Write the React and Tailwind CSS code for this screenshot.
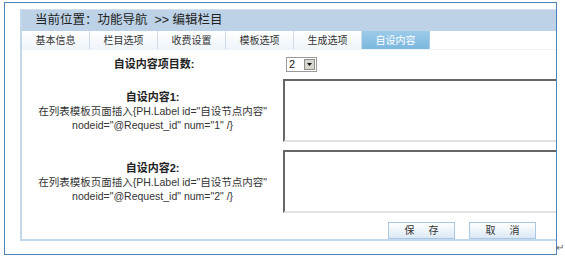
const tabs = ['基本信息', '栏目选项', '收费设置', '模板选项', '生成选项', '自设内容'];

function Tab({ label, active }) {
  return (
    <div
      className={`w-[68px] h-full flex items-center justify-center border-r text-[10px] ${
        active
          ? 'bg-gradient-to-b from-[#9ccbe8] to-[#7bb7df] text-white border-[#a9cde6]'
          : 'bg-gradient-to-b from-white to-[#eef4fa] text-[#333] border-[#cddbe9]'
      }`}
    >
      {label}
    </div>
  );
}

function Label({ n }) {
  return (
    <div className="w-[264px] flex flex-col items-center text-[10.5px] leading-[14px] text-[#333]">
      <div className="font-bold text-[11px] text-[#222]">自设内容{n}:</div>
      <div>在列表模板页面插入{'{'}PH.Label id="自设节点内容"</div>
      <div>nodeid="@Request_id" num="{n}" /{'}'}</div>
    </div>
  );
}

function Area() {
  return (
    <div className="w-[300px] h-[63px] bg-white border-2 border-t-[#666] border-l-[#666] border-b-[#e2e2e2] border-r-[#e2e2e2]" />
  );
}

function Button({ a, b }) {
  return (
    <div className="w-[67px] h-[17px] flex items-center justify-center gap-[14px] border border-[#aac8e4] bg-gradient-to-b from-white to-[#dbe8f5] text-[10px] text-[#333]">
      <span>{a}</span>
      <span>{b}</span>
    </div>
  );
}

export default function App() {
  return (
    <div
      className="w-[565px] h-[261px] bg-white relative"
      style={{ fontFamily: '"Liberation Sans", "Noto Sans CJK SC", sans-serif' }}
    >
      <div className="absolute left-[4px] top-[2px] w-[553px] h-[253px] border border-[#4f81bd] overflow-hidden">
        <div className="ml-[15px] mt-[6px] w-[560px] border-l-2 border-b-2 border-[#c4d8ec]">
          {/* header */}
          <div className="h-[22px] bg-[#bdd2e6] border-t border-[#d3e1ee] flex items-center pl-[13px] text-[12.5px] text-[#222] whitespace-pre">
            当前位置：功能导航  &gt;&gt; 编辑栏目
          </div>
          {/* tabs */}
          <div className="h-[19px] flex border-b border-[#eef3f8]">
            {tabs.map((t, i) => (
              <Tab key={t} label={t} active={i === 5} />
            ))}
          </div>
          {/* rows */}
          <div className="pt-[7px] flex flex-col">
            <div className="flex items-center h-[15px]">
              <div className="w-[264px] text-center font-bold text-[11px] text-[#222]">自设内容项目数:</div>
              <div className="w-[31px] h-[15px] flex items-center border border-[#9a9a9a] bg-white">
                <span className="flex-1 pl-[2px] text-[11px] leading-none text-[#111]">2</span>
                <span className="w-[11px] h-[11px] mr-[1px] bg-[#d8d5cc] border border-[#8f8f8f] flex items-center justify-center">
                  <svg width="5" height="3" viewBox="0 0 5 3">
                    <path d="M0 0h5L2.5 3z" fill="#111" />
                  </svg>
                </span>
              </div>
            </div>
            <div className="flex items-center mt-[7px]">
              <Label n={1} />
              <Area />
            </div>
            <div className="flex items-center mt-[8px]">
              <Label n={2} />
              <Area />
            </div>
            <div className="flex mt-[9px] pl-[366px] gap-[14px]">
              <Button a="保" b="存" />
              <Button a="取" b="消" />
            </div>
          </div>
        </div>
      </div>
      <div className="absolute left-[556px] top-[243px] text-[10px] leading-none text-[#666]">↵</div>
    </div>
  );
}
